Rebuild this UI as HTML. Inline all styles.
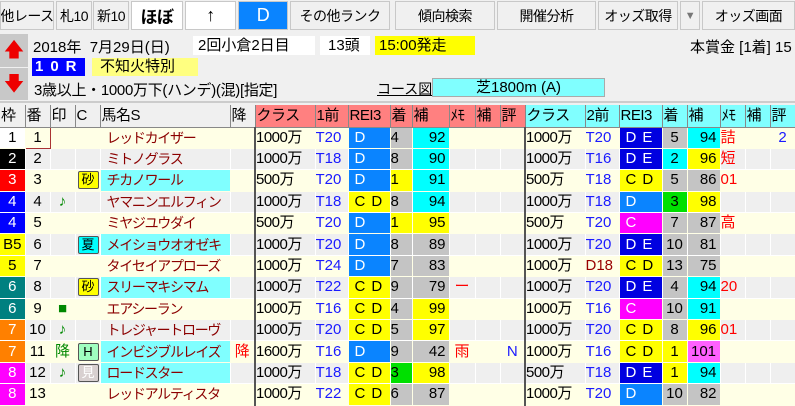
<!DOCTYPE html>
<html><head><meta charset="utf-8"><style>
*{margin:0;padding:0;box-sizing:border-box}
body{width:795px;height:401px;overflow:hidden;background:#f0f0f0;font-family:"Liberation Sans","Noto Sans CJK JP",sans-serif;position:relative;font-size:15px}
.b{position:absolute;top:1px;height:29px;background:#f0f0f0;border:1px solid #c8c8c8;display:flex;align-items:center;justify-content:center;font-size:14px;color:#000;white-space:nowrap;overflow:hidden;letter-spacing:-0.5px}
.a{position:absolute;white-space:nowrap}
table{position:absolute;left:0;top:105px;border-collapse:collapse;table-layout:fixed;width:795px}
td{height:21.4px;padding:0;overflow:hidden;white-space:nowrap;font-size:15px;line-height:20px;border-right:1px solid #fff;border-bottom:1px solid #fff}
tr.h td{height:22px;font-size:15px;border-right:1px solid #888;border-bottom:1px solid #888;padding-left:1px;letter-spacing:-0.5px}
tr.o td{background:#ffffe6;border-color:#ffffe6}
tr.e td{background:#efefef}
.c{text-align:center}.r{text-align:right;padding-right:3px}
.n{color:#8b0000;padding-left:6px;font-size:14px!important;letter-spacing:-1.3px}
.bl{color:#1a1aff}
.L{border-left:2px solid #555 !important;letter-spacing:-0.5px}
td.pk{background:#ff8080 !important}td.cy{background:#80ffff !important}
td.gr{background:#c4c4c4 !important}td.ye{background:#ffff00 !important}td.cn{background:#00ffff !important}td.gn{background:#00e000 !important}td.mg{background:#ff60ff !important}
td.D{background:#0a84ff !important;color:#fff;padding-left:6px}
td.DE{background:#0000e0 !important;color:#fff;padding-left:6px;letter-spacing:6px}
td.CD{background:#ffff00 !important;color:#000;padding-left:6px;letter-spacing:6px}
td.C{background:#ff00ff !important;color:#fff;padding-left:6px}
td.hn{background:#80ffff !important}
.tag{display:inline-block;width:21px;height:18px;border:1px solid #555;border-radius:2px;font-size:13px;line-height:16px;text-align:center;margin-left:2px}
.red{color:#f00}
</style></head><body>
<div class="b" style="left:0;width:54px">他レース</div>
<div class="b" style="left:56px;width:36px">札10</div>
<div class="b" style="left:93px;width:36px">新10</div>
<div class="b" style="left:131px;width:52px;background:#fff;font-weight:bold;font-size:17px">ほぼ</div>
<div class="b" style="left:185px;width:51px;background:#fff;font-weight:bold;font-size:18px">↑</div>
<div class="b" style="left:238px;width:50px;background:#0a84ff;color:#fff;font-size:18px">D</div>
<div class="b" style="left:290px;width:100px">その他ランク</div>
<div class="b" style="left:395px;width:100px">傾向検索</div>
<div class="b" style="left:497px;width:99px">開催分析</div>
<div class="b" style="left:598px;width:80px">オッズ取得</div>
<div class="b" style="left:680px;width:20px;color:#777;font-size:11px">▼</div>
<div class="b" style="left:702px;width:93px">オッズ画面</div>
<div class="a" style="left:0;top:34px;width:28px;height:33px;background:#c8c8c8;color:#e00;font-size:20px;text-align:center;line-height:32px">🡅</div>
<div class="a" style="left:0;top:68px;width:28px;height:32px;background:#c8c8c8;color:#e00;font-size:20px;text-align:center;line-height:32px">🡇</div>
<div class="a" style="left:33px;top:36px;font-size:15px">2018年 &nbsp;7月29日(日)</div>
<div class="a" style="left:193px;top:36px;width:122px;height:19px;background:#fff;padding-left:5px;line-height:19px">2回小倉2日目</div>
<div class="a" style="left:320px;top:36px;width:50px;height:19px;background:#fff;padding-left:8px;line-height:19px">13頭</div>
<div class="a" style="left:375px;top:36px;width:100px;height:19px;background:#ff0;padding-left:4px;line-height:19px">15:00発走</div>
<div class="a" style="left:690px;top:36px">本賞金 [1着] 15</div>
<div class="a" style="left:32px;top:58px;width:53px;height:18px;background:#0000ff;color:#fff;font-weight:bold;letter-spacing:7px;line-height:18px;padding-left:3px">10R</div>
<div class="a" style="left:92px;top:58px;width:106px;height:18px;background:#ffff80;padding-left:8px;line-height:18px">不知火特別</div>
<div class="a" style="left:34px;top:79px;letter-spacing:-0.3px">3歳以上・1000万下(ハンデ)(混)[指定]</div>
<div class="a" style="left:377px;top:79px;text-decoration:underline;font-size:14px">コース図</div>
<div class="a" style="left:432px;top:78px;width:173px;height:19px;background:#80ffff;border:1px solid #aaa;text-align:center;line-height:17px">芝1800m (A)</div>
<div class="a" style="left:0;top:101px;width:795px;height:2px;background:#ccc"></div>
<table>
<colgroup><col style="width:25px"><col style="width:25px"><col style="width:25px"><col style="width:25px"><col style="width:130px"><col style="width:25px"><col style="width:60px"><col style="width:33px"><col style="width:42px"><col style="width:22px"><col style="width:37px"><col style="width:26px"><col style="width:25px"><col style="width:25px"><col style="width:60px"><col style="width:34px"><col style="width:43px"><col style="width:25px"><col style="width:33px"><col style="width:25px"><col style="width:25px"><col style="width:25px"></colgroup>
<tr class="h"><td style="background:#f0f0f0">枠</td><td style="background:#f0f0f0">番</td><td style="background:#f0f0f0">印</td><td style="background:#f0f0f0">C</td><td style="background:#f0f0f0">馬名S</td><td style="background:#f0f0f0">降</td><td class="pk">クラス</td><td class="pk">1前</td><td class="pk">REI3</td><td class="pk">着</td><td class="pk">補</td><td class="pk">ﾒﾓ</td><td class="pk">補</td><td class="pk">評</td><td class="cy">クラス</td><td class="cy">2前</td><td class="cy">REI3</td><td class="cy">着</td><td class="cy">補</td><td class="cy">ﾒﾓ</td><td class="cy">補</td><td class="cy">評</td></tr>
<tr class="o"><td class="c" style="background:#fff">1</td><td class="c" style="border:1px solid #a33">1</td><td></td><td></td><td class="n">レッドカイザー</td><td></td><td class="L">1000万</td><td class="bl">T20</td><td class="D">D</td><td class="gr">4</td><td class="cn r">92</td><td></td><td></td><td></td><td class="L">1000万</td><td class="bl">T20</td><td class="DE">DE</td><td class="gr c">5</td><td class="cn r">94</td><td class="red">詰</td><td></td><td class="bl c">2</td></tr>
<tr class="e"><td class="c" style="background:#000!important;color:#fff">2</td><td class="c">2</td><td></td><td></td><td class="n">ミトノグラス</td><td></td><td class="L">1000万</td><td class="bl">T18</td><td class="D">D</td><td class="gr">8</td><td class="cn r">90</td><td></td><td></td><td></td><td class="L">1000万</td><td class="bl">T16</td><td class="DE">DE</td><td class="cn c">2</td><td class="ye r">96</td><td class="red">短</td><td></td><td></td></tr>
<tr class="o"><td class="c" style="background:#f00!important;color:#fff">3</td><td class="c">3</td><td></td><td><span class="tag" style="background:#ff0">砂</span></td><td class="n hn">チカノワール</td><td></td><td class="L">500万</td><td class="bl">T20</td><td class="D">D</td><td class="ye">1</td><td class="cn r">91</td><td></td><td></td><td></td><td class="L">500万</td><td class="bl">T18</td><td class="CD">CD</td><td class="gr c">5</td><td class="gr r">86</td><td class="red">01</td><td></td><td></td></tr>
<tr class="e"><td class="c" style="background:#00f!important;color:#fff">4</td><td class="c">4</td><td class="c" style="color:#080">♪</td><td></td><td class="n">ヤマニンエルフィン</td><td></td><td class="L">1000万</td><td class="bl">T18</td><td class="CD">CD</td><td class="gr">8</td><td class="cn r">94</td><td></td><td></td><td></td><td class="L">1000万</td><td class="bl">T18</td><td class="D">D</td><td class="gn c">3</td><td class="ye r">98</td><td></td><td></td><td></td></tr>
<tr class="o"><td class="c" style="background:#00f!important;color:#fff">4</td><td class="c">5</td><td></td><td></td><td class="n">ミヤジユウダイ</td><td></td><td class="L">500万</td><td class="bl">T20</td><td class="D">D</td><td class="ye">1</td><td class="ye r">95</td><td></td><td></td><td></td><td class="L">500万</td><td class="bl">T20</td><td class="C">C</td><td class="gr c">7</td><td class="gr r">87</td><td class="red">高</td><td></td><td></td></tr>
<tr class="e"><td class="c" style="background:#ff0!important">B5</td><td class="c">6</td><td></td><td><span class="tag" style="background:#0ff">夏</span></td><td class="n hn">メイショウオオゼキ</td><td></td><td class="L">1000万</td><td class="bl">T20</td><td class="D">D</td><td class="gr">8</td><td class="gr r">89</td><td></td><td></td><td></td><td class="L">1000万</td><td class="bl">T20</td><td class="DE">DE</td><td class="gr c">10</td><td class="gr r">81</td><td></td><td></td><td></td></tr>
<tr class="o"><td class="c" style="background:#ff0!important">5</td><td class="c">7</td><td></td><td></td><td class="n">タイセイアプローズ</td><td></td><td class="L">1000万</td><td class="bl">T24</td><td class="D">D</td><td class="gr">7</td><td class="gr r">83</td><td></td><td></td><td></td><td class="L">1000万</td><td style="color:#900">D18</td><td class="CD">CD</td><td class="gr c">13</td><td class="gr r">75</td><td></td><td></td><td></td></tr>
<tr class="e"><td class="c" style="background:#008080!important;color:#fff">6</td><td class="c">8</td><td></td><td><span class="tag" style="background:#ff0">砂</span></td><td class="n hn">スリーマキシマム</td><td></td><td class="L">1000万</td><td class="bl">T22</td><td class="CD">CD</td><td class="gr">9</td><td class="gr r">79</td><td class="red c">ー</td><td></td><td></td><td class="L">1000万</td><td class="bl">T20</td><td class="DE">DE</td><td class="gr c">4</td><td class="cn r">94</td><td class="red">20</td><td></td><td></td></tr>
<tr class="o"><td class="c" style="background:#008080!important;color:#fff">6</td><td class="c">9</td><td class="c" style="color:#080">■</td><td></td><td class="n">エアシーラン</td><td></td><td class="L">1000万</td><td class="bl">T16</td><td class="CD">CD</td><td class="gr">4</td><td class="ye r">99</td><td></td><td></td><td></td><td class="L">1000万</td><td class="bl">T16</td><td class="C">C</td><td class="gr c">10</td><td class="cn r">91</td><td></td><td></td><td></td></tr>
<tr class="e"><td class="c" style="background:#ff8000!important;color:#fff">7</td><td class="c">10</td><td class="c" style="color:#080">♪</td><td></td><td class="n">トレジャートローヴ</td><td></td><td class="L">1000万</td><td class="bl">T20</td><td class="CD">CD</td><td class="gr">5</td><td class="ye r">97</td><td></td><td></td><td></td><td class="L">1000万</td><td class="bl">T20</td><td class="CD">CD</td><td class="gr c">8</td><td class="ye r">96</td><td class="red">01</td><td></td><td></td></tr>
<tr class="o"><td class="c" style="background:#ff8000!important;color:#fff">7</td><td class="c">11</td><td class="c" style="color:#080">降</td><td><span class="tag" style="background:#a0ffc0">H</span></td><td class="n hn">インビジブルレイズ</td><td class="red c">降</td><td class="L">1600万</td><td class="bl">T16</td><td class="D">D</td><td class="gr">9</td><td class="gr r">42</td><td class="red c">雨</td><td></td><td class="bl c">N</td><td class="L">1000万</td><td class="bl">T16</td><td class="CD">CD</td><td class="ye c">1</td><td class="mg c">101</td><td></td><td></td><td></td></tr>
<tr class="e"><td class="c" style="background:#ff00ff!important;color:#fff">8</td><td class="c">12</td><td class="c" style="color:#080">♪</td><td><span class="tag" style="background:#d8d0d0;color:#fff">見</span></td><td class="n hn">ロードスター</td><td></td><td class="L">1000万</td><td class="bl">T18</td><td class="CD">CD</td><td class="gn">3</td><td class="ye r">98</td><td></td><td></td><td></td><td class="L">500万</td><td class="bl">T18</td><td class="DE">DE</td><td class="ye c">1</td><td class="cn r">94</td><td></td><td></td><td></td></tr>
<tr class="o"><td class="c" style="background:#ff00ff!important;color:#fff">8</td><td class="c">13</td><td></td><td></td><td class="n">レッドアルティスタ</td><td></td><td class="L">1000万</td><td class="bl">T22</td><td class="CD">CD</td><td class="gr">6</td><td class="gr r">87</td><td></td><td></td><td></td><td class="L">1000万</td><td class="bl">T20</td><td class="D">D</td><td class="gr c">10</td><td class="gr r">82</td><td></td><td></td><td></td></tr>
</table>
</body></html>
